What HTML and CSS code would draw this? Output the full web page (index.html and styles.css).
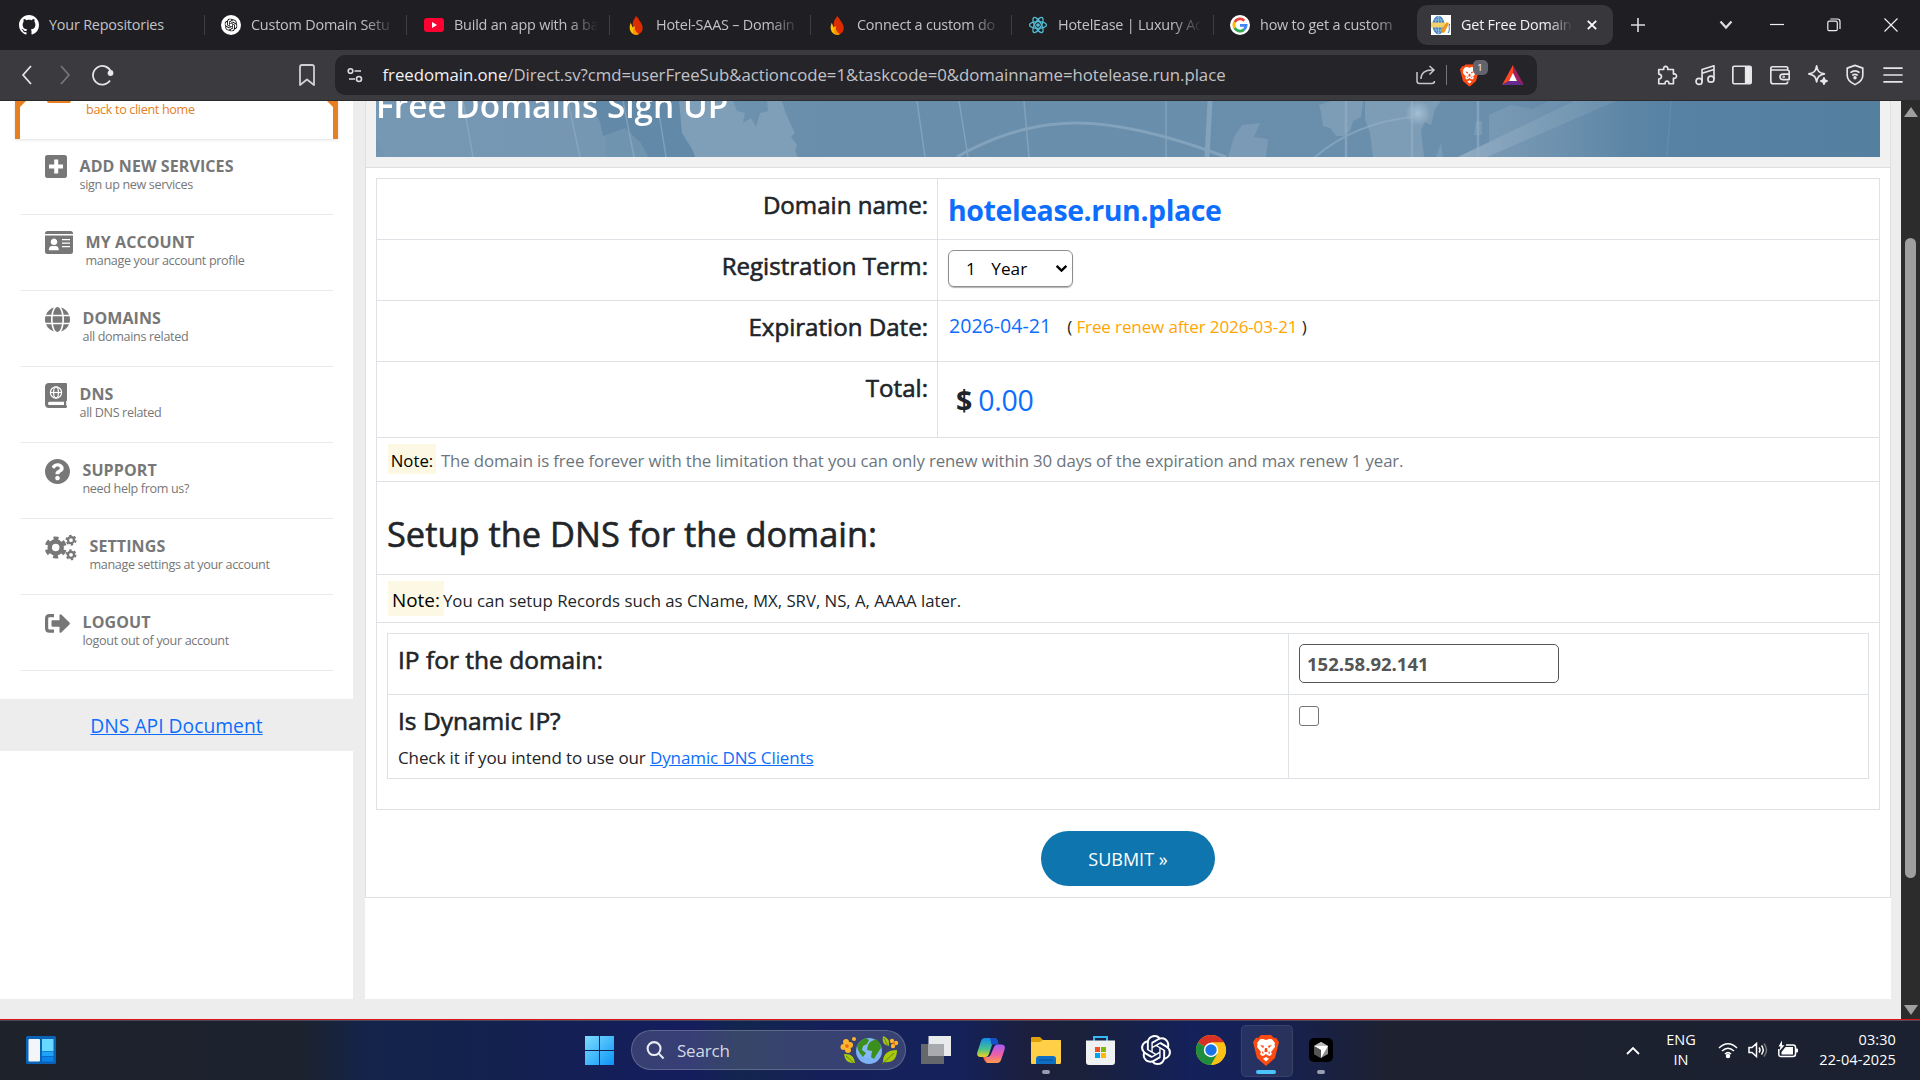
FILE: index.html
```html
<!DOCTYPE html>
<html lang="en">
<head>
<meta charset="utf-8">
<title>Get Free Domain</title>
<link rel="stylesheet" href="styles.css">
</head>
<body>
<svg class="defs" width="0" height="0" aria-hidden="true">
  <symbol id="openai" viewBox="0 0 24 24"><path d="M22.2819 9.8211a5.9847 5.9847 0 0 0-.5157-4.9108 6.0462 6.0462 0 0 0-6.5098-2.9A6.0651 6.0651 0 0 0 4.9807 4.1818a5.9847 5.9847 0 0 0-3.9977 2.9 6.0462 6.0462 0 0 0 .7427 7.0966 5.98 5.98 0 0 0 .511 4.9107 6.051 6.051 0 0 0 6.5146 2.9001A5.9847 5.9847 0 0 0 13.2599 24a6.0557 6.0557 0 0 0 5.7718-4.2058 5.9894 5.9894 0 0 0 3.9977-2.9001 6.0557 6.0557 0 0 0-.7475-7.0729zm-9.022 12.6081a4.4755 4.4755 0 0 1-2.8764-1.0408l.1419-.0804 4.7783-2.7582a.7948.7948 0 0 0 .3927-.6813v-6.7369l2.02 1.1686a.071.071 0 0 1 .038.052v5.5826a4.504 4.504 0 0 1-4.4945 4.4944zm-9.6607-4.1254a4.4708 4.4708 0 0 1-.5346-3.0137l.142.0852 4.783 2.7582a.7712.7712 0 0 0 .7806 0l5.8428-3.3685v2.3324a.0804.0804 0 0 1-.0332.0615L9.74 19.9502a4.4992 4.4992 0 0 1-6.1408-1.6464zM2.3408 7.8956a4.485 4.485 0 0 1 2.3655-1.9728V11.6a.7664.7664 0 0 0 .3879.6765l5.8144 3.3543-2.0201 1.1685a.0757.0757 0 0 1-.071 0l-4.8303-2.7865A4.504 4.504 0 0 1 2.3408 7.872zm16.5963 3.8558L13.1038 8.364 15.1192 7.2a.0757.0757 0 0 1 .071 0l4.8303 2.7913a4.4944 4.4944 0 0 1-.6765 8.1042v-5.6772a.79.79 0 0 0-.407-.667zm2.0107-3.0231l-.142-.0852-4.7735-2.7818a.7759.7759 0 0 0-.7854 0L9.409 9.2297V6.8974a.0662.0662 0 0 1 .0284-.0615l4.8303-2.7866a4.4992 4.4992 0 0 1 6.6802 4.66zM8.3065 12.863l-2.02-1.1638a.0804.0804 0 0 1-.038-.0567V6.0742a4.4992 4.4992 0 0 1 7.3757-3.4537l-.142.0805L8.704 5.459a.7948.7948 0 0 0-.3927.6813zm1.0976-2.3654l2.602-1.4998 2.6069 1.4998v2.9994l-2.5974 1.4997-2.6067-1.4997Z"/></symbol>
  <symbol id="brave" viewBox="0 0 26 31"><path fill="#fb4a12" d="M8 0h10l3 3 2-.3L26 7l-1 4-3 12-9 8-9-8L1 11 0 7l3-4.300L5 3z"/><path fill="#fff" d="M13 5l3-1 3 .2L22 8l-.5 1.500L22 12l-4 5 1 2-2 2-2-.6L13 19l-2 1.400-2 .6-2-2 1-2-4-5 .5-2.500L4 8l3-3.800L10 4zM13 22l3 1.800L13 26.500 10 23.800z"/><path fill="#fb4a12" d="M7 10l4 .8-.8 2.400zM19 10l-4 .8.8 2.400zM12 13h2l.7 3.500-1.700.8-1.700-.8zM9 16l2 2-1.500 1zM17 16l-2 2 1.500 1z"/></symbol>
  <symbol id="flame" viewBox="0 0 14 20"><path fill="#dd2c00" d="M7 0c-1 3-4 5-3.500 9L5 19c2.500 1.500 9 0 9-6.500C14 8 11 6 9.500 2.500z"/><path fill="#ffc400" d="M1.500 7C-.5 11-.5 17 5 19.500c2 .5 4 .5 5-.5C6 17 5.500 13 5.500 10.500L3.500 12z"/><path fill="#ff9100" d="M5.500 10.500C5.500 14 6 17 10 19c-2 1-4.500.5-5 0-1.500-2-1.500-5 .5-8.500z"/></symbol>
</svg>

<header class="browser">
  <div class="tabs">
    <div class="tab t1"><svg class="fav" viewBox="0 0 16 16"><path fill="#fff" d="M8 0C3.580 0 0 3.580 0 8c0 3.540 2.290 6.530 5.470 7.590.4.070.55-.17.55-.38 0-.19-.01-.82-.01-1.490-2.010.37-2.530-.49-2.690-.94-.09-.23-.48-.94-.82-1.130-.28-.15-.68-.52-.01-.53.63-.01 1.080.58 1.230.82.72 1.210 1.870.87 2.330.66.07-.52.28-.87.51-1.070-1.780-.2-3.640-.89-3.640-3.950 0-.87.31-1.590.82-2.150-.08-.2-.36-1.020.08-2.120 0 0 .67-.21 2.200.82.64-.18 1.320-.27 2-.27s1.360.09 2 .27c1.530-1.040 2.200-.82 2.200-.82.44 1.100.16 1.920.08 2.120.51.56.82 1.270.82 2.150 0 3.070-1.870 3.750-3.650 3.950.29.25.54.73.54 1.480 0 1.070-.01 1.930-.01 2.200 0 .21.15.46.55.38A8.010 8.010 0 0 0 16 8c0-4.420-3.580-8-8-8z"/></svg><span class="tx nofade">Your Repositories</span></div>
    <div class="tab t2"><svg class="fav" viewBox="0 0 20 20"><circle cx="10" cy="10" r="10" fill="#fff"/><use href="#openai" x="3.500" y="3.500" width="13" height="13"/></svg><span class="tx">Custom Domain Setu</span></div>
    <div class="tab t3"><svg class="fav" viewBox="0 0 20 20"><rect y="3" width="20" height="14" rx="3" fill="#f03"/><path fill="#fff" d="M8 7l5 3-5 3z"/></svg><span class="tx">Build an app with a ba</span></div>
    <div class="tab t4"><svg class="fav" viewBox="0 0 20 20"><use href="#flame" x="3" y="1" width="14" height="19"/></svg><span class="tx">Hotel-SAAS – Domain</span></div>
    <div class="tab t5"><svg class="fav" viewBox="0 0 20 20"><use href="#flame" x="3" y="1" width="14" height="19"/></svg><span class="tx">Connect a custom do</span></div>
    <div class="tab t6"><svg class="fav" viewBox="0 0 20 20" fill="none" stroke="#52bbd3" stroke-width="1.300"><ellipse cx="10" cy="10" rx="8.500" ry="3.300"/><ellipse cx="10" cy="10" rx="8.500" ry="3.300" transform="rotate(60 10 10)"/><ellipse cx="10" cy="10" rx="8.500" ry="3.300" transform="rotate(120 10 10)"/><circle cx="10" cy="10" r="1.200" fill="#52bbd3"/></svg><span class="tx">HotelEase | Luxury Ac</span></div>
    <div class="tab t7"><svg class="fav" viewBox="0 0 20 20" fill="none" stroke-width="2.800"><circle cx="10" cy="10" r="10" fill="#fff" /><path stroke="#ea4335" d="M14.300 5.700A6.100 6.100 0 0 0 4.700 7"/><path stroke="#fbbc05" d="M4.700 7a6.100 6.100 0 0 0 0 6"/><path stroke="#34a853" d="M4.700 13a6.100 6.100 0 0 0 9.300 1.600"/><path stroke="#4285f4" d="M14 14.600a6.100 6.100 0 0 0 2.100-4.200H10"/></svg><span class="tx">how to get a custom</span></div>
    <div class="tab active"><svg class="fav" viewBox="0 0 20 20"><path fill="#fff" d="M0 0h20v20H0z"/><ellipse cx="7.500" cy="10" rx="6" ry="9.300" fill="#3f7fb8"/><path stroke="#9cc4e6" fill="none" stroke-width=".7" d="M7.500 1v18M3 5h9M3 15h9M7.500 1C3 6 3 14 7.500 19M7.500 1c4.500 5 4.500 13 0 18"/><path fill="#f4d06a" d="M0 7.500h14v5H0z"/><path fill="#f09a1c" d="M15.500 7l2.500 1.500-4.500 9-3.500.5 1-4z"/><path stroke="#2f6fb2" fill="none" d="M18.500 9c-1 3 1 6-1.500 9"/></svg><span class="tx">Get Free Domain</span><svg class="x" viewBox="0 0 10 10"><path d="M.8.8l8.400 8.400M9.200.8L.8 9.200"/></svg></div>
    <svg class="plus" viewBox="0 0 14 14"><path d="M7 0v14M0 7h14"/></svg>
    <svg class="chev" viewBox="0 0 14 10"><path d="M1.500 1.500L7 7.500l5.500-6"/></svg>
    <svg class="win" viewBox="0 0 14 14"><path d="M0 6.500h14"/></svg>
    <svg class="win" viewBox="0 0 14 14"><rect x=".8" y="3.200" width="9.500" height="9.500" rx="1.500"/><path d="M3.300 1h7q2.700 0 2.700 2.700V11"/></svg>
    <svg class="win" viewBox="0 0 14 14"><path d="M.5.5l13 13M13.500.5l-13 13"/></svg>
  </div>
  <div class="toolbar">
    <svg class="ic" viewBox="0 0 24 24"><path d="M16 3l-8 9 8 9"/></svg>
    <svg class="ic dim" viewBox="0 0 24 24"><path d="M8 3l8 9-8 9"/></svg>
    <svg class="ic" viewBox="0 0 24 24"><path d="M19 17.500A9.300 9.300 0 1 1 20 9"/><circle cx="19.500" cy="10" r="2" fill="#eee"/></svg>
    <svg class="ic mark" viewBox="0 0 24 24"><path d="M5 4q0-2 2-2h10q2 0 2 2v18l-7-5.500L5 22z"/></svg>
    <div class="url">
      <svg class="tune" viewBox="0 0 16 16"><circle cx="3.500" cy="4" r="2.300"/><path d="M7.500 4H14M2 12h6"/><circle cx="12" cy="12" r="2.500"/></svg>
      <span class="address"><b>freedomain.one</b>/Direct.sv?cmd=userFreeSub&amp;actioncode=1&amp;taskcode=0&amp;domainname=hotelease.run.place</span>
      <svg class="share" viewBox="0 0 20 20"><path d="M1 7v9q0 2.500 2.500 2.500H16q2.500 0 2.500-2.500M5 14C5 8 9 4.500 17.500 5M13.500 1l4.500 4-4.500 4.500"/></svg>
      <i class="sep"></i>
      <span class="shield"><svg viewBox="0 0 26 31"><use href="#brave"/></svg><em>1</em></span>
      <svg class="bat" viewBox="0 0 22 20"><path fill="#ff4724" d="M11 0L0 20l7-4 4-7z"/><path fill="#9e1f63" d="M11 0l11 20-7-4-4-7z"/><path fill="#662d91" d="M0 20h22l-7-4H7z"/><path fill="#fff" d="M11 8l4 8H7z"/></svg>
    </div>
    <div class="tools">
      <svg class="ic" viewBox="0 0 24 24"><path d="M3 6h5.500C7 1.500 14 1.500 12.800 6H19v5c4.500-1.200 4.500 5.700 0 4.500V21.500h-5c1-3.800-5-3.800-4 0H3v-5c4-.5 4-5 0-5.500z"/></svg>
      <svg class="ic" viewBox="0 0 24 24"><circle cx="5.500" cy="19" r="3.300"/><circle cx="18.500" cy="16.500" r="3.300"/><path d="M8.800 19V6l13-4v14.500M8.800 10l13-4"/></svg>
      <svg class="ic" viewBox="0 0 24 24"><rect x="2" y="2.500" width="20" height="19" rx="1.500"/><path fill="#eee" d="M16 3h5v18h-5z"/></svg>
      <svg class="ic" viewBox="0 0 24 24"><path d="M20.500 7V5q0-2-2-2H4q-2 0-2 2v14q0 2.500 2.500 2.500H18q2.500 0 2.500-2.500M2 6.500h18q2 0 2 2V17h-7q-3 0-3-3t3-3h7"/><circle cx="16" cy="14" r=".5"/></svg>
      <svg class="ic" viewBox="0 0 24 24"><path d="M10.500 2c1 6 2.500 7.500 8.500 8.800-6 1.300-7.500 2.800-8.500 8.700-1-5.900-2.500-7.400-8.500-8.700C8 9.500 9.500 8 10.500 2z"/><path fill="#eee" d="M18.500 15l1 2.500 2.500 1-2.500 1-1 2.500-1-2.500-2.500-1 2.500-1z"/></svg>
      <svg class="ic" viewBox="0 0 24 24"><path d="M12 1.500l8.500 3v8q0 6-8.500 10-8.500-4-8.500-10v-8zM7 9.500q5-4 10 0M9 12.500q3-2.500 6 0"/><circle cx="12" cy="15" r="1" fill="#eee"/></svg>
      <svg class="ic" viewBox="0 0 24 24"><path d="M1.500 4.500h21M1.500 12h21M1.500 19.500h21"/></svg>
    </div>
  </div>
</header>

<main class="page">
  <aside class="side">
    <div class="home"><i class="bar"></i><span>back to client home</span></div>
    <nav>
      <a class="item"><svg width="22" height="23" viewBox="0 0 22 23"><path fill-rule="evenodd" d="M2.500 0h17Q22 0 22 2.500v18q0 2.500-2.500 2.500h-17Q0 23 0 20.500v-18Q0 0 2.500 0zM9.200 4.500v5H4v4h5.200v5h4v-5H18v-4h-4.800v-5z"/></svg><span><b>ADD NEW SERVICES</b><small>sign up new services</small></span></a>
      <a class="item"><svg width="28" height="23" viewBox="0 0 28 23"><path fill-rule="evenodd" d="M2.500 0h23Q28 0 28 2.500V3H0v-.5Q0 0 2.500 0zM0 4.500h28v16q0 2.500-2.500 2.500h-23Q0 23 0 20.500zM9 7.500a3.300 3.300 0 1 0 .01 0zM3.800 19.300h10q0-4.300-3.500-4.300H7.300q-3.500 0-3.500 4.300zM17 8v1.300h8V8zm0 3.400v1.300h8v-1.300zm0 3.500v1.300h8v-1.300z"/></svg><span><b>MY ACCOUNT</b><small>manage your account profile</small></span></a>
      <a class="item"><svg width="25" height="25" viewBox="0 8 496 496"><path d="M336.500 160C322 70.700 287.800 8 248 8s-74 62.700-88.500 152h177zM152 256c0 22.200 1.200 43.500 3.300 64h185.300c2.100-20.500 3.300-41.800 3.300-64s-1.200-43.500-3.300-64H155.300c-2.100 20.500-3.300 41.800-3.300 64zm324.700-96c-28.600-67.900-86.500-120.400-158-141.600 24.400 33.800 41.200 84.700 50 141.600h108zM177.200 18.400C105.800 39.600 47.800 92.100 19.300 160h108c8.700-56.900 25.500-107.800 49.900-141.600zM487.400 192H372.700c2.100 21 3.300 42.500 3.300 64s-1.200 43-3.300 64h114.600c5.500-20.500 8.600-41.800 8.600-64s-3.100-43.500-8.500-64zM120 256c0-21.500 1.200-43 3.300-64H8.600C3.200 212.500 0 233.800 0 256s3.200 43.500 8.600 64h114.600c-2-21-3.200-42.500-3.200-64zm39.500 96c14.500 89.300 48.700 152 88.500 152s74-62.700 88.500-152h-177zm159.300 141.600c71.400-21.200 129.400-73.700 158-141.600h-108c-8.800 56.900-25.600 107.800-50 141.600zM19.300 352c28.600 67.900 86.500 120.400 158 141.600-24.400-33.800-41.200-84.700-50-141.600h-108z"/></svg><span><b>DOMAINS</b><small>all domains related</small></span></a>
      <a class="item"><svg width="22" height="25" viewBox="0 0 22 25"><path fill-rule="evenodd" d="M4 0h17q1 0 1 1v16q0 1-.8 1.300v4q.8.200.8 1.200T21 25H4q-4 0-4-4V4q0-4 4-4zM4.500 18.800q-1.500 0-1.500 1.600T4.500 22H19v-3.200z"/><g fill="none" stroke="#fff" stroke-width="1.200"><circle cx="11" cy="9.500" r="5.600"/><ellipse cx="11" cy="9.500" rx="2.400" ry="5.600"/><path d="M5.500 9.500h11"/></g></svg><span><b>DNS</b><small>all DNS related</small></span></a>
      <a class="item"><svg width="25" height="25" viewBox="8 8 496 496"><path d="M504 256c0 136.997-111.043 248-248 248S8 392.997 8 256C8 119.083 119.043 8 256 8s248 111.083 248 248zM262.655 90c-54.497 0-89.255 22.957-116.549 63.758-3.536 5.286-2.353 12.415 2.715 16.258l34.699 26.310c5.205 3.947 12.621 3.008 16.665-2.122 17.864-22.658 30.113-35.797 57.303-35.797 20.429 0 45.698 13.148 45.698 32.958 0 14.976-12.363 22.667-32.534 33.976C247.128 238.528 216 254.941 216 296v4c0 6.627 5.373 12 12 12h56c6.627 0 12-5.373 12-12v-1.333c0-28.462 83.186-29.647 83.186-106.667 0-58.002-60.165-102-116.531-102zM256 338c-25.365 0-46 20.635-46 46 0 25.364 20.635 46 46 46s46-20.636 46-46c0-25.365-20.635-46-46-46z"/></svg><span><b>SUPPORT</b><small>need help from us?</small></span></a>
      <a class="item"><svg width="32" height="25" viewBox="0 0 32 25" fill="none" stroke="#777"><circle cx="10.700" cy="12.500" r="6" stroke-width="4.500"/><circle cx="10.700" cy="12.500" r="9.300" stroke-width="3.400" stroke-dasharray="5 4.740" stroke-dashoffset="7.370"/><circle cx="26" cy="5.200" r="3" stroke-width="2.200"/><circle cx="26" cy="5.200" r="4.700" stroke-width="1.600" stroke-dasharray="2.500 2.420"/><circle cx="26" cy="19.800" r="3" stroke-width="2.200"/><circle cx="26" cy="19.800" r="4.700" stroke-width="1.600" stroke-dasharray="2.500 2.420"/></svg><span><b>SETTINGS</b><small>manage settings at your account</small></span></a>
      <a class="item"><svg width="25" height="25" viewBox="0 0 25 25"><path fill="none" stroke="#777" stroke-width="3.200" d="M9 4.600H4.500Q1.600 4.600 1.600 7.500v9.800q0 2.900 2.900 2.900H9"/><path d="M7.500 9.300h7V4q.5-1.300 1.800-.6l8.200 8.200q.7.900 0 1.800l-8.200 8.200q-1.300.7-1.800-.6v-5.300h-7q-1 0-1-1v-4.400q0-1 1-1z"/></svg><span><b>LOGOUT</b><small>logout out of your account</small></span></a>
    </nav>
    <div class="api"><a>DNS API Document</a></div>
  </aside>

  <section class="main">
    <div class="card">
      <div class="head">
        <div class="banner">
          <svg viewBox="0 0 1504 56" width="1504" height="56">
            <defs>
              <linearGradient id="bg" x2="1" y2="0"><stop offset="0" stop-color="#7296b2"/><stop offset=".2" stop-color="#6f94b0"/><stop offset=".3" stop-color="#688eac"/><stop offset=".75" stop-color="#6a8fad"/><stop offset=".86" stop-color="#5882a3"/><stop offset="1" stop-color="#547f9f"/></linearGradient>
              <linearGradient id="land" x2="1" y2="0"><stop offset="0" stop-color="#83a1b9"/><stop offset="1" stop-color="#83a1b9" stop-opacity="0"/></linearGradient>
              <linearGradient id="beam" x2="1" y2="0"><stop offset="0" stop-color="#90abc2"/><stop offset="1" stop-color="#6a90ad"/></linearGradient>
              <radialGradient id="glow"><stop offset="0" stop-color="#a5bfd3"/><stop offset="1" stop-color="#a5bfd3" stop-opacity="0"/></radialGradient>
            </defs>
            <path fill="url(#bg)" d="M0 0h1504v56H0z"/>
            <path fill="#7898b3" d="M0 0h230v56H8L0 36z" opacity=".7"/>
            <path fill="#6289a8" d="M213 0h90l5 22 10 16 7 18h-53l-7-14-16-15-22 8-3-14z"/>
            <path fill="#7f9eb8" d="M303 0h54l4 10 8 2-2 10 8-5 5 9 4-14 8-2-1-10h15l3 10 6 14 4 8-4 4 6 8-2 6 3 6-2 10h-97l-7-18-10-16z"/>
            <path fill="#8ba6be" opacity=".5" d="M852 56l6-20 8-12 18-2-6 14 14 2-2 18z"/>
            <path fill="#7d9db6" d="M943 4l12-4h32l-2 16-8 4-3 10-6 5h-8l-6-8-7-2-2-14zM989 0h76l-6 8-4 16-6-3-4 8 3 27h-51l-3-24-5-14z"/>
            <path fill="#7c9cb6" d="M1060 56l5-14 2 14zM1100 20h6v14h-8z" opacity=".8"/>
            <path fill="url(#land)" d="M1113 14l22-10 22 4 16-8h80v56h-140z" opacity=".55"/>
            <path fill="url(#beam)" d="M1082 56L1198 0h42L1111 56z"/>
            <g fill="none" stroke="#94afc5" stroke-width="1.500" opacity=".6">
              <path d="M87 0l10 56M192 0l12 56M247 0l11 56M281 0l9 56M541 0l8 56M583 0l9 56M648 0l5 56M790 0v56"/>
              <path stroke-width="2.500" d="M970 0v56M1036 0v56M1102 0v56"/>
              <path stroke-width="5" d="M834 0l-3 56"/>
              <path stroke-width="3" d="M581 56Q640 22 700 22t150 34"/>
              <path stroke-width="2" d="M939 56q40-34 97-40"/>
              <path d="M1295 0l-4 56" opacity=".3"/>
            </g>
            <circle cx="1042" cy="12" r="13" fill="url(#glow)"/>
          </svg>
          <h1>Free Domains Sign UP</h1>
        </div>
      </div>
      <div class="grid">
        <div class="row r1"><div class="lab">Domain name:</div><div class="val"><span class="domain">hotelease.run.place</span></div></div>
        <div class="row r1"><div class="lab">Registration Term:</div><div class="val"><div class="select"><span>1&nbsp;&nbsp; Year</span><svg viewBox="0 0 12 8"><path d="M1.500 1.500L6 6l4.500-4.500"/></svg></div></div></div>
        <div class="row r1"><div class="lab">Expiration Date:</div><div class="val date"><span class="blue">2026-04-21</span><span class="renew">( <i>Free renew after 2026-03-21</i> )</span></div></div>
        <div class="row r4"><div class="lab">Total:</div><div class="val total"><b>$</b><span>0.00</span></div></div>
        <div class="row note n1"><mark>Note:</mark><span class="grey">The domain is free forever with the limitation that you can only renew within 30 days of the expiration and max renew 1 year.</span></div>
        <div class="row setup"><h2>Setup the DNS for the domain:</h2></div>
        <div class="row note n2"><mark>Note:</mark><span>You can setup Records such as CName, MX, SRV, NS, A, AAAA later.</span></div>
        <div class="row last">
          <div class="inner">
            <div class="irow"><div class="il"><h3>IP for the domain:</h3></div><div class="iv"><div class="input">152.58.92.141</div></div></div>
            <div class="irow tall"><div class="il"><h3>Is Dynamic IP?</h3><p>Check it if you intend to use our <a>Dynamic DNS Clients</a></p></div><div class="iv"><div class="check"></div></div></div>
          </div>
        </div>
      </div>
      <div class="actions"><button>SUBMIT »</button></div>
    </div>
  </section>

  <div class="scroll"><i class="up"></i><i class="thumb"></i><i class="down"></i></div>
</main>

<footer class="taskbar">
  <svg class="widgets" viewBox="0 0 30 28"><rect width="30" height="28" rx="1.500" fill="#0b63b8"/><rect x="2.500" y="3" width="11.500" height="22.500" rx="1" fill="#f3f5f8"/><path fill="#67d8ff" d="M16 3h11.500v12H16z"/><path fill="#1ea4f7" d="M16 15.500h11.500V20H16z"/><path fill="#0a84ea" d="M16 20.700h11.500v4.800H16z"/></svg>
  <div class="cell first"><svg width="29" height="29" viewBox="0 0 29 29"><defs><linearGradient id="wn" gradientUnits="userSpaceOnUse" x1="0" y1="0" x2="29" y2="29"><stop stop-color="#7fdcff"/><stop offset="1" stop-color="#0a95f5"/></linearGradient></defs><path fill="url(#wn)" d="M0 0h14v14H0zM15 0h14v14H15zM0 15h14v14H0zM15 15h14v14H15z"/></svg></div>
  <div class="search">
    <svg class="mag" viewBox="0 0 20 20"><circle cx="8.500" cy="8" r="6.800"/><path d="M13.500 13.300l5 5.200"/></svg><span>Search</span>
    <svg class="earth" viewBox="0 0 58 30"><circle cx="29" cy="16" r="13" fill="#7db2f5"/><circle cx="27" cy="14" r="9" fill="#8dbcff" opacity=".6"/><path fill="#3c8f1c" d="M17 11q3-6 9-8l3 2-2 4-4 2-1 4 4 3-3 4q-5-5-6-11zM30 7l6-3 4 4 1 5-4 6-3 5-3-2 1-6-5-1 1-5z"/><path fill="#a7c80c" d="M4 19q10-1 11 9-10 1-11-9zM43 27q0-12 14-12 0 14-14 12zM43 1q7 2 6 10-8-1-6-10z"/><path stroke="#5c8a10" fill="none" d="M6 21l8 7M42 29l12-11M44 3l4 8"/><g fill="#ffb52b"><circle cx="6" cy="7" r="3"/><circle cx="10" cy="10" r="3"/><circle cx="8" cy="15" r="3"/><circle cx="3.500" cy="12" r="3"/><circle cx="14" cy="4" r="2"/><circle cx="52" cy="6" r="2.200"/><circle cx="56" cy="8" r="2.200"/><circle cx="53" cy="11" r="2.200"/></g><circle cx="7" cy="11" r="1.800" fill="#e8680c"/><circle cx="53.700" cy="8.300" r="1.200" fill="#e8680c"/></svg>
  </div>
  <div class="cell"><svg width="30" height="28" viewBox="0 0 30 28"><path fill="#64676c" d="M0 8h23v20H0z"/><path fill="#e9eaec" d="M7.500 0H30v20H7.500z"/><path fill="#a8aaad" d="M7.500 8H23v12H7.500z"/></svg></div>
  <div class="cell"><svg width="28" height="25" viewBox="0 0 28 25"><defs><linearGradient id="c1" x2="0" y2="1"><stop stop-color="#118bf0"/><stop offset=".6" stop-color="#4cc38a"/><stop offset="1" stop-color="#f5d01c"/></linearGradient><linearGradient id="c2" x2="0" y2="1"><stop stop-color="#a45cf5"/><stop offset=".55" stop-color="#ee5fa8"/><stop offset="1" stop-color="#ff9c4a"/></linearGradient></defs><path fill="url(#c1)" d="M8 0h9q3 0 4 4h-3q-2 0-3 3l-3 9q-1 3-4 3H4q-5 0-3.600-5L4 3q1-3 4-3z"/><path fill="#1450c8" d="M13 0h4q3 0 4 4l1 2.500h-6.500q-2 0-1.500-3z"/><path fill="#f2583e" d="M6 19h5q-1 3 1.500 6H11q-3 0-5-6z"/><path fill="url(#c2)" d="M20 25h-9q-2 0-3.500-6H10q3 0 4-3l3-7q1-3 4-2.500h3q5 0 3.600 5L24 22q-1 3-4 3z"/></svg></div>
  <div class="cell run"><svg width="30" height="27" viewBox="0 0 30 27"><path fill="#e0a008" d="M0 1q0-1 1-1h8l3 3h17q1 0 1 1v6H0z"/><path fill="#ffcf47" d="M0 5h9l3-2h17q1 0 1 1v21q0 2-1 2H1q-1 0-1-1z"/><path fill="#0f6fc5" d="M5 27v-5q0-3 3-3h14q3 0 3 3v5z"/><path stroke="#0a4f98" d="M8 23h14"/></svg></div>
  <div class="cell"><svg width="29" height="29" viewBox="0 0 29 29"><path fill="none" stroke="#34b7f5" stroke-width="2" d="M8 6V1h13v5"/><path fill="#f0f1f3" d="M0 4.500h29V26q0 3-3 3H3q-3 0-3-3z"/><path fill="#f25022" d="M9 11h5v5H9z"/><path fill="#7fba00" d="M15 11h5v5h-5z"/><path fill="#00a4ef" d="M9 17h5v5H9z"/><path fill="#ffb900" d="M15 17h5v5h-5z"/></svg></div>
  <div class="cell"><svg width="30" height="30" fill="#fff"><use href="#openai"/></svg></div>
  <div class="cell"><svg width="30" height="30" viewBox="0 0 30 30"><circle cx="15" cy="15" r="15" fill="#fbc116"/><path fill="#d93025" d="M15 15L2 7.500A15 15 0 0 1 28 7.500H15z"/><path fill="#1e8e3e" d="M2 7.500A15 15 0 0 0 15 30l6.500-11.300L15 15z"/><path fill="#fbc116" d="M28 7.500H15l6.500 11.200L15 30A15 15 0 0 0 28 7.500z"/><circle cx="15" cy="15" r="7.200" fill="#fff"/><circle cx="15" cy="15" r="5.700" fill="#1a73e8"/></svg></div>
  <div class="cell on"><svg width="26" height="31"><use href="#brave"/></svg></div>
  <div class="cell run"><svg width="24" height="24" viewBox="0 0 24 24"><rect width="24" height="24" rx="5" fill="#000"/><path fill="#8d8d8d" d="M12 4l7 4v8l-7 4-7-4V8z"/><path fill="#fff" d="M19 8l-7 12v-8L5 8z"/><path fill="#555" d="M5 8l7 4v8l-7-4z"/><path fill="#bbb" d="M12 4l7 4H5z"/></svg></div>
  <div class="tray">
    <svg class="up" viewBox="0 0 14 9"><path d="M1 8l6-6 6 6"/></svg>
    <div class="lang">ENG<br>IN</div>
    <svg class="st" viewBox="0 0 20 16"><path d="M1 6q9-8.500 18 0M4 9q6-5.600 12 0M7 12q3-2.800 6 0"/><circle cx="10" cy="14" r="1.500" fill="#fff"/></svg>
    <svg class="st" viewBox="0 0 20 16"><path d="M1 5.500v5h3l4.500 4V1.500L4 5.500zM11 5.500q2 2.500 0 5M13.500 3.500q3.500 4.500 0 9"/><path stroke="#777" d="M16 1.500q5 6.500 0 13"/></svg>
    <svg class="st" viewBox="0 0 20 16"><path d="M8 3h7q2.500 0 2.500 2.500v6.500q0 2.500-2.500 2.500H3Q.8 14.500.8 12.500V7"/><path fill="#fff" stroke="none" d="M7.500 5H15v7.500H3.500V10zM18 6.500h1q1 0 1 1v2q0 1-1 1h-1z"/><path fill="#fff" stroke="none" d="M4-1.500L.5 4.500h2L1.500 9 6.500 3.200H4z"/></svg>
    <div class="clock">03:30<br>22-04-2025</div>
  </div>
</footer>
</body>
</html>
```
FILE: styles.css
```css
* { box-sizing: border-box; }
html, body { margin: 0; height: 100%; overflow: hidden; }
body {
  width: 1920px;
  height: 1080px;
  font-family: "Open Sans", "Noto Sans", sans-serif;
  color: #212529;
  background: #ededed;
  display: flex;
  flex-direction: column;
  white-space: nowrap;
}
svg { display: block; flex: none; overflow: visible; }
.defs { position: absolute; }
i, em { font-style: normal; }

/* browser chrome */
.browser { height: 101px; background: #3b3a3f; border-bottom: 1px solid #2b2a2f; flex: none; }
.tabs { height: 50px; background: #1f1e23; display: flex; align-items: center; }
.tab { flex: none; height: 20px; display: flex; align-items: center; border-right: 1px solid #3f3e44; color: #c2c2c5; font-size: 14.400px; letter-spacing: -.2px; padding-left: 16px; }
.tab.t1 { width: 205px; padding-left: 19px; }
.tab.t2 { width: 202px; }
.tab.t3 { width: 203px; padding-left: 17px; }
.tab.t4 { width: 201px; }
.tab.t5 { width: 201px; }
.tab.t6 { width: 202px; }
.tab.t7 { width: 203px; border: 0; }
.fav { width: 20px; height: 20px; margin-right: 10px; }
.tx { width: 150px; line-height: 24px; -webkit-mask-image: linear-gradient(90deg, #000 76%, transparent 96%); mask-image: linear-gradient(90deg, #000 76%, transparent 96%); }
.tx.nofade { -webkit-mask-image: none; mask-image: none; }
.tab.active { width: 196px; height: 40px; border: 0; border-radius: 10px; background: #38373c; color: #f2f2f3; padding-left: 14px; }
.active .tx { width: 116px; margin-right: 10px; }
.x { width: 10px; height: 10px; stroke: #fff; stroke-width: 1.800; fill: none; }
.plus { width: 14px; height: 14px; margin-left: 18px; stroke: #ddd; stroke-width: 1.600; }
.chev { width: 14px; height: 10px; margin: 0 37px 0 74px; fill: none; stroke: #ddd; stroke-width: 2.200; }
.win { width: 14px; height: 14px; margin-right: 43px; fill: none; stroke: #eee; stroke-width: 1.200; }
.toolbar { height: 50px; display: flex; align-items: center; padding-left: 15px; }
.ic { width: 24px; height: 24px; margin-right: 14px; fill: none; stroke: #e6e6e8; stroke-width: 1.800; stroke-linejoin: round; }
.ic.dim { stroke: #77767b; }
.ic.mark { margin: 0 16px 0 166px; stroke: #d0d0d3; }
.url { width: 1202px; height: 40px; border-radius: 10px; background: #252429; display: flex; align-items: center; padding-left: 12px; }
.tune { width: 16px; height: 16px; fill: none; stroke: #ddd; stroke-width: 1.600; }
.address { width: 1033px; margin: -2px 0 0 19.500px; font-size: 16.800px; color: #c2c2c6; letter-spacing: -.04px; }
.address b { font-weight: 400; color: #f1f1f3; }
.share { width: 20px; height: 20px; fill: none; stroke: #c8c8cb; stroke-width: 1.500; }
.sep { width: 1px; height: 20px; background: #77767b; margin: 0 13px 0 10px; }
.shield { position: relative; }
.shield svg { width: 19px; height: 23px; }
.shield em { position: absolute; left: 13px; top: -4px; width: 15px; height: 15px; border-radius: 5px; background: #63636e; color: #fff; font-size: 9.500px; line-height: 15px; text-align: center; }
.bat { width: 22px; height: 20px; margin-left: 23px; }
.tools { display: flex; margin-left: 119px; }
.tools .ic { width: 22px; height: 22px; margin-right: 15.700px; }

/* page */
.page { flex: 1; min-height: 0; display: flex; }
.side { width: 353px; height: 898px; background: #fff; margin-right: 12px; }
.home { width: 323px; height: 38px; margin-left: 15px; border: solid #e67e22; border-width: 0 5px; background: #fff; box-shadow: 0 1px 3px rgba(0,0,0,.12); position: relative; padding-left: 66px; font-size: 12.600px; line-height: 17px; color: #e67e22; letter-spacing: -.33px; }
.home::before, .home::after { content: ""; position: absolute; top: 0; border-top: 6px solid #e67e22; }
.home::before { left: 0; border-right: 6px solid transparent; }
.home::after { right: 0; border-left: 6px solid transparent; }
.home .bar { position: absolute; left: 27px; top: 0; width: 24px; height: 2px; border-radius: 0 0 2px 2px; background: #e67e22; }
.item { display: flex; width: 313px; height: 76px; margin-left: 20px; padding: 16px 0 0 25px; border-bottom: 1px solid #ebebeb; fill: #777; color: #777; }
.item svg { margin-right: 12.500px; }
.item span { display: flex; flex-direction: column; }
.item b { font-size: 16px; line-height: 20px; margin-top: 1px; letter-spacing: .1px; }
.item small { font-size: 12.600px; line-height: 17px; letter-spacing: -.35px; }
.api { margin-top: 28px; height: 52px; background: #ededed; text-align: center; font-size: 19.300px; line-height: 54px; }
.api a, .il a { color: #0d6efd; text-decoration: underline; }
.main { width: 1526px; height: 898px; background: #fff; margin-right: 10px; }
.card { height: 797px; border: 1px solid #dedfe1; border-top: 0; }
.head { height: 67px; background: #f1f1f1; border-bottom: 1px solid #dedfe1; padding-left: 10px; }
.banner { width: 1504px; height: 56px; position: relative; overflow: hidden; }
.banner h1 { position: absolute; left: 0; top: -18px; margin: 0; color: #fff; font-size: 33.400px; line-height: 44px; font-weight: 600; }
.grid { width: 1504px; margin: 10px 0 0 10px; border: 1px solid #dee2e6; border-top: 0; }
.row { border-top: 1px solid #dee2e6; display: flex; }
.r1 { height: 61px; }
.r4 { height: 76px; }
.lab { width: 561px; border-right: 1px solid #dee2e6; text-align: right; padding: 9px 9px 0 0; font-size: 24.100px; line-height: 34px; }
.lab, h2, h3 { -webkit-text-stroke: .6px #212529; }
.val { padding-left: 10px; display: flex; }
.domain { color: #0d6efd; font-weight: 700; font-size: 28.500px; line-height: 40px; padding-top: 11px; letter-spacing: -.42px; }
.select { width: 125px; height: 37px; margin-top: 10px; border: 1px solid #8f8f8f; border-radius: 6px; box-shadow: 0 1px 1px rgba(0,0,0,.3); display: flex; align-items: center; justify-content: space-between; padding: 0 4px 0 17px; font-size: 17.200px; color: #000; }
.select span { word-spacing: .7px; }
.select svg { width: 13px; height: 9px; fill: none; stroke: #000; stroke-width: 2.200; }
.date { line-height: 50px; padding-left: 11px; }
.blue { color: #0d6efd; font-size: 19.600px; }
.renew { font-size: 17px; margin-left: 16px; letter-spacing: -.12px; line-height: 52px; }
.renew i { color: #ffa500; }
.total { padding-left: 18px; font-size: 28.500px; line-height: 76px; }
.total span { color: #0d6efd; margin-left: 6px; letter-spacing: -.3px; }
.note { align-items: flex-start; padding: 6px 0 0 11px; font-size: 16.800px; line-height: 34px; }
.n1 { height: 44px; }
.n2 { height: 48px; }
.note mark { background: #fcf8e3; color: #000; width: 48px; height: 30px; margin-right: 5px; text-align: center; }
.n2 mark { width: 56px; height: 35px; margin-right: -1px; font-size: 18.900px; line-height: 38px; text-align: left; padding-left: 4px; }
.n2 span { line-height: 40px; letter-spacing: -.02px; position: relative; }
.grey { color: #6c757d; letter-spacing: -.12px; }
.setup { height: 93px; padding: 29px 0 0 10px; }
h2, h3, p { margin: 0; font-weight: 400; }
h2 { font-size: 34.400px; line-height: 46px; }
.last { height: 187px; padding: 10px 0 0 10px; }
.inner { width: 1482px; height: 146px; border: 1px solid #dee2e6; display: flex; flex-direction: column; }
.irow { display: flex; height: 61px; border-bottom: 1px solid #dee2e6; }
.tall { height: 84px; border: 0; }
.il { width: 901px; border-right: 1px solid #dee2e6; padding: 9px 0 0 10px; }
h3 { font-size: 24.500px; line-height: 34px; }
.il p { font-size: 17px; line-height: 24px; margin-top: 8px; letter-spacing: -.11px; }
.iv { padding: 10px 0 0 10px; }
.input { width: 260px; height: 39px; border: 1px solid #555; border-radius: 5px; padding-left: 7px; line-height: 37px; font-size: 18.500px; font-weight: 700; color: #555; }
.check { width: 20px; height: 20px; margin-top: 1px; border: 1.500px solid #767676; border-radius: 3px; }
.actions { text-align: center; padding-top: 21px; }
.actions button { width: 174px; height: 55px; border: 0; border-radius: 28px; background: #0f75ae; color: #fff; font: 18px/56px "Open Sans", sans-serif; padding: 0; }
.scroll { width: 19px; height: 919px; background: #2c2c2c; display: flex; flex-direction: column; align-items: center; }
.scroll i { border: 6px solid transparent; width: 0; height: 0; }
.scroll .up { border-width: 0 7px 10px; border-bottom-color: #9f9f9f; margin-top: 6px; }
.scroll .thumb { width: 11px; height: 640px; border: 0; border-radius: 6px; background: #9f9f9f; margin: 121px 0 127px; }
.scroll .down { border-width: 10px 7px 0; border-top-color: #9f9f9f; }

/* taskbar */
.taskbar { height: 61px; margin-top: -1px; border-top: 1px solid #e2121a; box-shadow: inset 0 1px #474c58; background: linear-gradient(90deg, #1d222b 0, #1c222e 300px, #14244a 365px, #13224e 480px, #151d5e 690px, #13264e 740px, #15205a 830px, #14225a 960px, #1c1f3c 1030px, #1a203a 1080px, #14215a 1190px, #152156 1260px, #1d2130 1390px, #1b2130 1920px); display: flex; align-items: center; color: #fff; flex: none; }
.widgets { width: 30px; height: 28px; margin-left: 26px; }
.cell { width: 55px; height: 60px; display: flex; align-items: center; justify-content: center; position: relative; flex: none; }
.first { margin-left: 516px; }
.search { width: 275px; height: 40px; margin: 0 2px 0 4px; border: 1px solid rgba(255,255,255,.2); border-radius: 20px; background: rgba(255,255,255,.15); display: flex; align-items: center; padding-left: 14px; font-size: 17px; color: #d4d8e2; }
.mag { width: 19px; height: 19px; margin-right: 12px; fill: none; stroke: #e8ebf2; stroke-width: 2.200; }
.search span { width: 163px; letter-spacing: -.2px; }
.earth { width: 58px; height: 30px; }
.run::after, .on::after { content: ""; position: absolute; bottom: 6px; left: 23.500px; width: 8px; height: 4px; border-radius: 2px; background: #9a9db0; }
.on::after { width: 20px; left: 17.500px; background: #4cc2ff; }
.on::before { content: ""; position: absolute; left: 2.500px; top: 5px; width: 50px; height: 50px; border-radius: 5px; background: rgba(255,255,255,.08); border: 1px solid rgba(255,255,255,.08); }
.on svg { position: relative; }
.tray { margin-left: auto; margin-right: 24px; display: flex; align-items: center; font-size: 14.500px; line-height: 20px; }
.tray .up { width: 14px; height: 9px; margin-right: 26px; fill: none; stroke: #fff; stroke-width: 1.800; }
.lang { width: 30px; text-align: center; margin-right: 22px; }
.st { width: 20px; height: 16px; margin-right: 10px; fill: none; stroke: #fff; stroke-width: 1.500; }
.clock { text-align: right; margin-left: 10px; width: 78px; letter-spacing: .1px; }
```
